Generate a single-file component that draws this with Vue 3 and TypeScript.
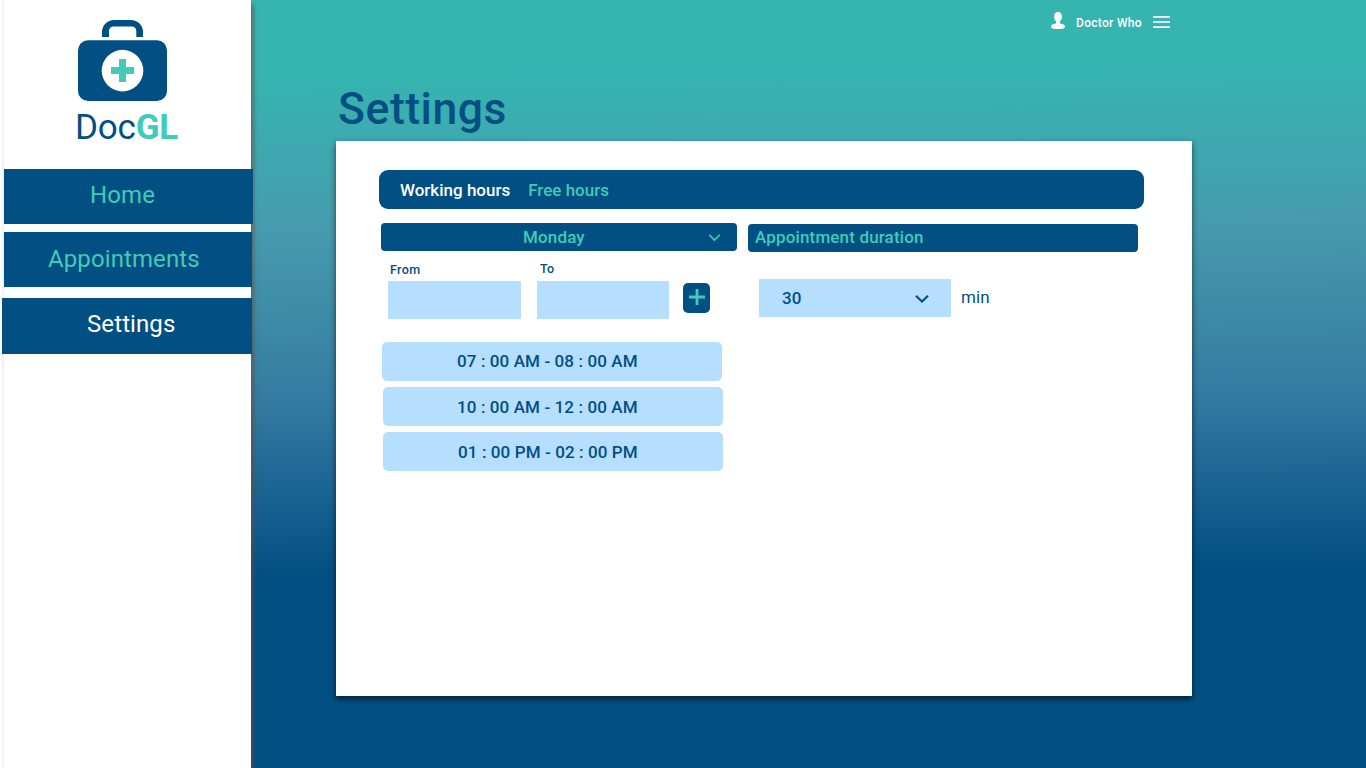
<script setup lang="ts">
interface NavItem {
  id: string
  label: string
}

interface Slot {
  id: string
  label: string
}

const navItems: NavItem[] = [
  { id: 'home', label: 'Home' },
  { id: 'appointments', label: 'Appointments' },
  { id: 'settings', label: 'Settings' },
]

const slots: Slot[] = [
  { id: 'first', label: '07 : 00 AM - 08 : 00 AM' },
  { id: 'second', label: '10 : 00 AM - 12 : 00 AM' },
  { id: 'third', label: '01 : 00 PM - 02 : 00 PM' },
]
</script>

<template>
  <div class="page">
    <aside class="sidebar">
      <svg class="logo" width="89" height="81" viewBox="0 0 89 81">
        <path d="M24 17V12A12 12 0 0 1 36 0H53A12 12 0 0 1 65 12V17H58.300V11A4.500 4.500 0 0 0 53.800 6.500H35.500A4.500 4.500 0 0 0 31 11V17Z" fill="#024f83" />
        <rect x="0" y="20.300" width="89" height="60.700" rx="10" fill="#024f83" />
        <circle cx="44.500" cy="50.600" r="20.800" fill="#fff" />
        <path d="M41 39h7v8h8v7h-8v8h-7v-8h-8v-7h8z" fill="#41cbb8" />
      </svg>
      <div class="brand"><span class="brand-doc">Doc</span><span class="brand-gl">GL</span></div>
      <nav class="nav">
        <a v-for="item in navItems" :key="item.id" :class="['nav-item', item.id]"><span>{{ item.label }}</span></a>
      </nav>
    </aside>

    <main class="main">
      <header class="topbar">
        <svg class="user-icon" width="14" height="18" viewBox="0 0 14 18">
          <path d="M7 0C9.500 0 11 1.900 11 4.500C11 6.700 10 8.400 8.800 9.400V11.200C10.500 11.700 14 12.200 14 14.700C14 16.500 11.500 17 7 17S0 16.500 0 14.700C0 12.200 3.500 11.700 5.200 11.200V9.400C4 8.400 3 6.700 3 4.500C3 1.900 4.500 0 7 0Z" fill="#fff" />
        </svg>
        <span class="user-name">Doctor Who</span>
        <svg class="menu-icon" width="17" height="12" viewBox="0 0 17 12">
          <path d="M0 0h17v1.700H0zM0 5.200h17v1.600H0zM0 10.300h17v1.700H0z" fill="#fff" />
        </svg>
      </header>
      <h1 class="title">Settings</h1>
      <section class="card">
        <div class="tabs">
          <span class="tab active">Working hours</span>
          <span class="tab free">Free hours</span>
        </div>
        <div class="columns">
          <div class="hours">
            <div class="day">
              <span class="day-name">Monday</span>
              <svg class="day-arrow" width="12" height="9" viewBox="0 0 12 9">
                <path d="M1.300 1.800L6.500 7L11.700 1.800" fill="none" stroke="#41cbb8" stroke-width="1.700" />
              </svg>
            </div>
            <div class="range">
              <label class="field from"><span>From</span><i class="box"></i></label>
              <label class="field to"><span>To</span><i class="box"></i></label>
              <button class="add" type="button" aria-label="Add">
                <svg width="16" height="16" viewBox="0 0 16 16"><path d="M8 0V16M0 8H16" stroke="#41cbb8" stroke-width="2.800" /></svg>
              </button>
            </div>
            <ul class="slots">
              <li v-for="slot in slots" :key="slot.id" :class="['slot', slot.id]"><span>{{ slot.label }}</span></li>
            </ul>
          </div>
          <div class="duration">
            <div class="duration-head"><span>Appointment duration</span></div>
            <div class="duration-row">
              <div class="select">
                <span>30</span>
                <svg width="14" height="9" viewBox="0 0 14 9"><path d="M1 1.800L7 7.500L13 1.800" fill="none" stroke="#024f83" stroke-width="2.200" /></svg>
              </div>
              <span class="unit">min</span>
            </div>
          </div>
        </div>
      </section>
    </main>
  </div>
</template>

<style>
body {
  margin: 0;
  overflow: hidden;
}
</style>

<style scoped>
.page {
  display: flex;
  box-sizing: border-box;
  width: 1366px;
  height: 768px;
  padding-left: 4px;
  overflow: hidden;
  font-family: Roboto, "Liberation Sans", sans-serif;
  color: #024f83;
  background: linear-gradient(179.500deg, #36b4b0 82px, #479bae 232px, #337aa1 409px, #024f83 577px);
}

.page span {
  white-space: pre;
}

.page::before {
  content: "";
  flex: none;
  width: 4px;
  margin-left: -4px;
  background: linear-gradient(90deg, #fff 1px, #ededed);
}

.sidebar {
  flex: none;
  display: flex;
  flex-direction: column;
  width: 247px;
  height: 768px;
  background: #fff;
  box-shadow: 4px 4px 4px -1px rgba(100, 75, 65, 0.6);
}

.logo {
  display: block;
  flex: none;
  margin: 20px 0 0 74px;
}

.brand {
  margin: 6px 0 0 71px;
  height: 42px;
  font-size: 35px;
  line-height: 42px;
  letter-spacing: -0.200px;
  white-space: nowrap;
}

.brand-gl {
  font-weight: 700;
  color: #41cbb8;
}

.nav {
  margin-top: 20px;
}

.nav-item {
  display: block;
  height: 55px;
  font-size: 24px;
  line-height: 52px;
  letter-spacing: 0.100px;
  color: #41cbb8;
  background: #024f83;
}

.home {
  width: 249px;
  margin-bottom: 8px;
}

.home span {
  margin-left: 86px;
}

.appointments {
  width: 248px;
  margin-bottom: 11px;
  line-height: 54px;
}

.appointments span {
  margin-left: 44px;
}

.settings {
  width: 250px;
  height: 56px;
  margin-left: -2px;
  color: #fff;
}

.settings span {
  margin-left: 85px;
}

.main {
  flex: 1;
}

.topbar {
  display: flex;
  height: 86px;
}

.user-icon {
  margin: 12px 0 0 800px;
}

.user-name {
  width: 77px;
  margin: 15px 0 0 11px;
  font-size: 12px;
  font-weight: 500;
  line-height: 16px;
  letter-spacing: 0.300px;
  color: #fff;
}

.menu-icon {
  margin-top: 16px;
}

.title {
  height: 55px;
  margin: 0 0 0 87px;
  font-size: 44.500px;
  font-weight: 500;
  line-height: 46px;
  letter-spacing: 0.550px;
}

.card {
  box-sizing: border-box;
  width: 856px;
  height: 555px;
  margin-left: 85px;
  padding: 29px 0 0 43px;
  background: #fff;
  box-shadow: 0 3px 6px rgba(0, 0, 0, 0.6);
}

.tabs {
  display: flex;
  box-sizing: border-box;
  width: 765px;
  height: 39px;
  padding-left: 21px;
  gap: 18px;
  border-radius: 9px;
  font-size: 17px;
  font-weight: 500;
  line-height: 40px;
  color: #fff;
  background: #024f83;
}

.tab.free {
  color: #41cbb8;
}

.columns {
  display: flex;
  margin: 14px 0 0 2px;
  gap: 11px;
}

.hours {
  width: 356px;
}

.day {
  display: flex;
  align-items: center;
  height: 28px;
  border-radius: 4px;
  font-size: 17px;
  font-weight: 500;
  line-height: 28px;
  letter-spacing: 0.150px;
  color: #41cbb8;
  background: #024f83;
}

.day-name {
  width: 185px;
  margin-left: 142px;
}

.range {
  display: flex;
  margin: 10px 0 0 7px;
}

.field {
  display: flex;
  flex-direction: column;
  font-size: 12.500px;
  font-weight: 500;
  line-height: 15px;
  letter-spacing: 0.350px;
}

.field span {
  height: 20px;
  margin-left: 2px;
}

.box {
  height: 38px;
  background: #b5deff;
}

.from {
  width: 133px;
}

.to {
  width: 132px;
  margin-left: 16px;
}

.to span {
  margin-left: 3px;
}

.from span {
  box-sizing: border-box;
  padding-top: 1px;
}

.add {
  display: block;
  width: 27px;
  height: 30px;
  margin: 22px 0 0 14px;
  padding: 0 0 2px;
  border: 0;
  border-radius: 5px;
  line-height: 0;
  background: #024f83;
}

.slots {
  margin: 23px 0 0 1px;
  padding: 0;
  list-style: none;
}

.slot {
  width: 340px;
  height: 39px;
  border-radius: 5px;
  font-size: 17px;
  font-weight: 500;
  line-height: 39px;
  letter-spacing: 0.110px;
  background: #b5deff;
}

.slot span {
  margin-left: 75px;
}

.slot.second {
  margin: 6px 0 6px 1px;
  line-height: 40px;
}

.slot.third {
  margin-left: 1px;
  line-height: 41px;
}

.slot.second span {
  margin-left: 74px;
}

.duration {
  width: 390px;
  padding-top: 1px;
}

.duration-head {
  height: 28px;
  padding-left: 7px;
  border-radius: 4px;
  font-size: 17px;
  font-weight: 500;
  line-height: 27px;
  letter-spacing: 0.150px;
  color: #41cbb8;
  background: #024f83;
  box-sizing: border-box;
}

.duration-row {
  display: flex;
  margin: 27px 0 0 11px;
}

.select {
  display: flex;
  align-items: center;
  justify-content: space-between;
  box-sizing: border-box;
  width: 192px;
  height: 38px;
  padding: 0 22.500px 0 23px;
  font-size: 17px;
  font-weight: 500;
  line-height: 38px;
  background: #b5deff;
}

.unit {
  margin-left: 10px;
  font-size: 17px;
  line-height: 36px;
  letter-spacing: 0.150px;
}
</style>
